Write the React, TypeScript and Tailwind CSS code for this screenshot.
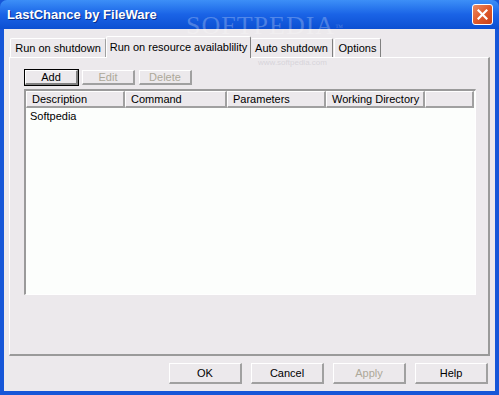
import React from "react";

const Btn = ({
  label,
  w,
  h,
  disabled,
  isDefault,
}: {
  label: string;
  w: string;
  h: string;
  disabled?: boolean;
  isDefault?: boolean;
}) => (
  <div
    className={`${w} ${h} flex items-center justify-center border ${
      isDefault ? "border-black" : "border-transparent"
    }`}
  >
    <div
      className={`w-full h-full flex items-center justify-center bg-[#ece9ec] border-t border-l border-t-white border-l-white border-b-2 border-r-2 ${
        isDefault ? "border-b-[#808080] border-r-[#808080]" : "border-b-[#a0a0a0] border-r-[#a0a0a0]"
      } ${disabled ? "text-[#aca899]" : "text-black"}`}
    >
      {label}
    </div>
  </div>
);

const HeaderCell = ({ label, w }: { label: string; w: string }) => (
  <div
    className={`${w} h-full flex items-center pl-[5px] bg-[#ece9ec] border-t border-l border-t-white border-l-white border-b-2 border-r-2 border-b-[#a0a0a0] border-r-[#a0a0a0] whitespace-nowrap overflow-hidden`}
  >
    {label}
  </div>
);

const App = () => {
  return (
    <div className="relative w-[499px] h-[395px] bg-[#1656d8] flex flex-col font-['Liberation_Sans',Arial,sans-serif] text-[11px] text-black overflow-hidden">
      {/* title bar */}
      <div className="h-[29px] rounded-t-[7px] bg-gradient-to-b from-[#3d8ff7] via-[#1a63e6] to-[#0b4fd2] flex items-center justify-between pl-[7px] pr-[6px]">
        <span className="text-white font-bold text-[13px] [text-shadow:1px_1px_0_#0a2f8a]">
          LastChance by FileWare
        </span>
        <div className="w-[21px] h-[21px] rounded-[3px] border border-white bg-gradient-to-br from-[#e98a62] via-[#e05a2a] to-[#c8401a] flex items-center justify-center">
          <svg width="11" height="11" viewBox="0 0 11 11">
            <path d="M1.5 1.5 L9.5 9.5 M9.5 1.5 L1.5 9.5" stroke="white" strokeWidth="2.2" strokeLinecap="square" />
          </svg>
        </div>
      </div>

      {/* client area */}
      <div className="flex-1 ml-[4px] mr-[4px] mb-[4px] bg-[#ece9ec] flex flex-col pt-[6px]">
        {/* tabs */}
        <div className="flex items-end h-[22px] pl-[6px]">
          <div className="h-[19px] w-[96px] flex items-center justify-center border-t border-l border-r border-t-white border-l-white border-r-[#a0a0a0] rounded-t-[2px]">
            Run on shutdown
          </div>
          <div className="h-[22px] w-[145px] flex items-start pt-[2px] justify-center border-t border-l border-r border-t-white border-l-white border-r-[#808080] rounded-t-[2px] bg-[#ece9ec] -mb-px relative z-10">
            Run on resource availablility
          </div>
          <div className="h-[19px] w-[82px] flex items-center justify-center border-t border-r border-t-white border-r-[#808080] rounded-t-[2px]">
            Auto shutdown
          </div>
          <div className="h-[19px] w-[47px] ml-[1px] flex items-center justify-center border-t border-l border-r border-t-white border-l-white border-r-[#808080] rounded-t-[2px]">
            Options
          </div>
        </div>

        {/* panel */}
        <div className="ml-[5px] w-[481px] h-[299px] border-t border-l border-t-white border-l-white border-b-2 border-r-2 border-b-[#9a9a9a] border-r-[#9a9a9a] pl-[14px] pt-[11px] flex flex-col">
          <div className="flex gap-[2px] h-[17px]">
            <Btn label="Add" w="w-[55px]" h="h-[17px]" isDefault />
            <Btn label="Edit" w="w-[55px]" h="h-[17px]" disabled />
            <Btn label="Delete" w="w-[55px]" h="h-[17px]" disabled />
          </div>
          <div className="mt-[3px] w-[452px] h-[206px] bg-[#fcfefc] border-t-2 border-l-2 border-t-[#9a9a9a] border-l-[#9a9a9a] border-b border-r border-b-white border-r-white flex flex-col">
            <div className="flex h-[17px] w-full">
              <HeaderCell label="Description" w="w-[99px]" />
              <HeaderCell label="Command" w="w-[102px]" />
              <HeaderCell label="Parameters" w="w-[99px]" />
              <HeaderCell label="Working Directory" w="w-[99px]" />
              <HeaderCell label="" w="w-[49px]" />
            </div>
            <div className="pl-[4px] pt-[1px] leading-[14px]">Softpedia</div>
          </div>
        </div>

        {/* dialog buttons */}
        <div className="flex justify-end gap-[7px] mt-[6px] pr-[6px]">
          <Btn label="OK" w="w-[75px]" h="h-[23px]" />
          <Btn label="Cancel" w="w-[75px]" h="h-[23px]" />
          <Btn label="Apply" w="w-[75px]" h="h-[23px]" disabled />
          <Btn label="Help" w="w-[75px]" h="h-[23px]" />
        </div>
      </div>

      {/* watermark */}
      <div className="absolute left-[186px] top-[6px] text-[26px] font-['Liberation_Serif',serif] tracking-[1px] text-white/25 pointer-events-none">
        SOFTPEDIA<sup className="text-[8px]">™</sup>
      </div>
      <div className="absolute left-[258px] top-[58px] text-[8px] leading-[9px] text-[#c8c6cc]/60 pointer-events-none">
        www.softpedia.com
      </div>
    </div>
  );
};

export default App;
